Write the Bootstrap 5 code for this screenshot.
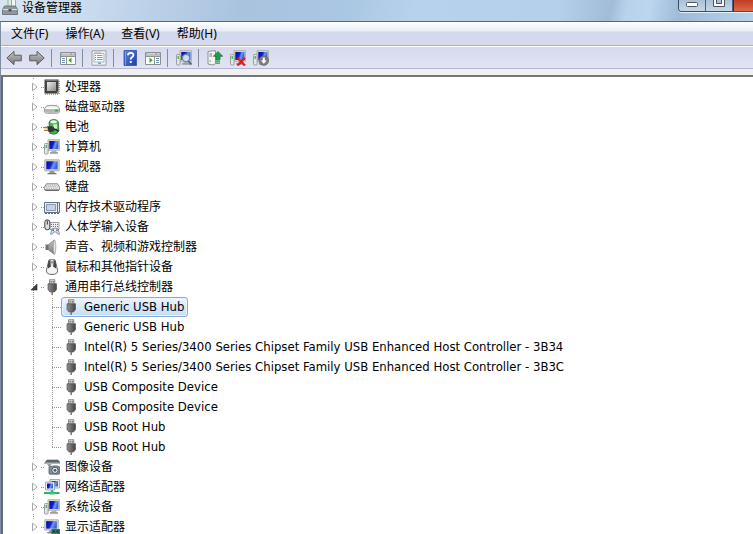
<!DOCTYPE html>
<html lang="zh-CN">
<head>
<meta charset="utf-8">
<meta name="viewport" content="width=device-width, initial-scale=1">
<title>设备管理器</title>
<link href="https://cdn.jsdelivr.net/npm/bootstrap@5.3.0/dist/css/bootstrap.min.css" rel="stylesheet">
<style>
body{font:12px/20px "Noto Sans","Noto Sans CJK SC",sans-serif;color:#000;background:#f0f0f0}
button{font:inherit;color:inherit;background:none;border:0;padding:0}
svg{display:block;flex:none}
.ico{width:16px;height:16px}
.titlebar{height:21px;background:linear-gradient(100deg,#d9e5f2 0,#cfdff0 8%,#a9c3df 32%,#a9c6e2 45%,#b7d2ec 55%,#b5d0ea 74%,#a2bcd8 81%,#b9d2ec 83%,#bdd6ee 86%,#9fbbd8 90%,#b9d3ed 100%)}
.titlebar h1{font-size:12px;line-height:15px}
.brand{padding-left:2px}
.caption{height:12px;border:1px solid #3e4d60;border-width:0 0 1px 1px;border-radius:0 0 0 4px;box-shadow:0 1px 0 #e6f0fa;overflow:hidden}
.caption button{width:27px;border-right:1px solid #4d6078;background:linear-gradient(#a9c0d8,#c6d8ea);display:flex;justify-content:center}
.caption .close-win{width:20px;border:0;border-left:1px solid #5d1a12;background:linear-gradient(#c03c20,#dd6b4a)}
.frame{border-top:1px solid #56677b;border-left:1px solid #7d8da2}
.menus{height:24px;border-bottom:1px solid #aeb0bd;background:linear-gradient(#fff 0,#e8edf6 9px,#d4d9eb 10px,#d4d9eb 100%);padding-left:2px;gap:1px}
.menus button{padding:0 8px}
.tools{height:23px;border-top:1px solid #fff;border-bottom:1px solid #b2b6d4;background:linear-gradient(#d5daec,#e0e4f5);padding-left:1px}
.tools button{width:23px;height:21px;display:flex;align-items:center;justify-content:center}
.sep{width:8px;height:18px;padding-left:3px}
.sep::before{content:"";display:block;width:1px;height:100%;background:#858a9c}
.pane{margin-top:6px;border:2px solid #696c72;border-width:2px 0 0 2px;border-top-color:#77777a;background:#fff}
ul{list-style:none;margin:0;padding:0}
.tree{padding-left:24px;background:repeating-linear-gradient(#fff 0 1px,#909090 1px 2px) 30px 0/1px 100% no-repeat}
.line{display:flex;align-items:center;height:20px;white-space:nowrap}
.twist{width:14px;height:14px;background:#fff;display:flex;align-items:center;justify-content:center}
.open .twist{background:none}
.dots{width:3px;height:1px;background:repeating-linear-gradient(90deg,#909090 0 1px,#fff 1px 2px)}
.node{display:flex;align-items:center;gap:5px;height:20px}
.kids li{padding-left:25px;background:repeating-linear-gradient(#fff 0 1px,#909090 1px 2px) 25px 0/1px 100% no-repeat}
.kids li:last-child{background-size:1px 11px}
.kids .dots{width:9px}
.kids .node{border:1px solid transparent;border-radius:3px;padding:0 3px 0 1px;font-family:"DejaVu Sans Condensed","Noto Sans",sans-serif;font-size:13px}
.kids .node.active{border-color:#84acdd;background:linear-gradient(#eef5fd,#c5dcf6);box-shadow:inset 0 0 0 1px #e9f3fe}
</style>
<script src="https://cdn.jsdelivr.net/npm/bootstrap@5.3.0/dist/js/bootstrap.bundle.min.js"></script>
</head>
<body class="vh-100 overflow-hidden d-flex flex-column">
<svg width="0" height="0" class="position-absolute" aria-hidden="true">
<defs>
<linearGradient id="gScr" x1="0" y1="0" x2="1" y2="0.3"><stop offset="0" stop-color="#0208a0"/><stop offset=".5" stop-color="#1225cc"/><stop offset=".7" stop-color="#6f96f0"/><stop offset="1" stop-color="#3560dc"/></linearGradient>
<linearGradient id="gGrey" x1="0" y1="0" x2="0" y2="1"><stop offset="0" stop-color="#c4c4c4"/><stop offset="1" stop-color="#777"/></linearGradient>
<linearGradient id="gChip" x1="0" y1="0" x2="1" y2="1"><stop offset="0" stop-color="#eee"/><stop offset="1" stop-color="#8b8b8b"/></linearGradient>
<linearGradient id="gHelp" x1="0" y1="0" x2="1" y2="1"><stop offset="0" stop-color="#5f86dc"/><stop offset="1" stop-color="#1b3fa8"/></linearGradient>
<linearGradient id="gPlug" x1="0" y1="0" x2="1" y2="0"><stop offset="0" stop-color="#8e8e8e"/><stop offset=".5" stop-color="#6a6a6a"/><stop offset="1" stop-color="#444"/></linearGradient>
<symbol id="twist" viewBox="0 0 8 10"><path d="M2.500 1.200v7.600L7 5z" fill="#fff" stroke="#a6a6a6"/></symbol>
<symbol id="twistopen" viewBox="0 0 8 8"><path d="M7 1v6H1z" fill="#404040" stroke="#262626" stroke-width=".6"/></symbol>
<symbol id="pc" viewBox="0 0 16 16"><path d="M4 .7h11.600v10.600H4z" fill="#dedccb" stroke="#a3a396" stroke-width=".8"/><path d="M5.300 2h9.200v8H5.300z" fill="url(#gScr)"/><path d="M8 11.500h4l.8 2H7.200z" fill="#b2b5b8"/><path d="M6 13.200h8v1.500H6z" fill="#8e9194"/><rect x=".5" y="4.500" width="3.600" height="10.500" rx=".8" fill="#e4e6e8" stroke="#8a8d90" stroke-width=".8"/><path d="M2.200 6v3" stroke="#35b13b" stroke-width="1.200"/></symbol>
<symbol id="monitor" viewBox="0 0 16 16"><path d="M.8.8h14.400v11H.8z" fill="#dddccc" stroke="#9e9f98" stroke-width=".8"/><path d="M2.300 2.300h11.400v8H2.300z" fill="url(#gScr)"/><path d="M6 12h4l1 2H5z" fill="#999"/><path d="M3.500 14h9v1.300h-9z" fill="#777"/></symbol>
<symbol id="cpu" viewBox="0 0 16 16"><path d="M1 15.200h14M15.200 2v13" stroke="#d69a35" stroke-width="1.600" stroke-dasharray="1 1"/><path d="M.5 .5h14v14H.5z" fill="#414141"/><path d="M1.500 1.500h12" stroke="#777"/><path d="M3 3h9v9H3z" fill="url(#gChip)"/><path d="M13 12.500h1.500V14H13z" fill="#ef9a24"/></symbol>
<symbol id="disk" viewBox="0 0 16 16"><path d="M.5 9.200 3 6.800q5-1 10 0l2.500 2.400v3.600q-.5 1.400-2 1.400h-11Q.8 14.200 .5 12.800z" fill="#f1f1f1" stroke="#8d8d8d" stroke-width=".9"/><path d="M1 9.700h14v3.500q-7 1.600-14 0z" fill="#b4b7b9"/><path d="M2 9.500h12" stroke="#fff"/><path d="M11 10.500h3v2h-3z" fill="#2ac52c"/></symbol>
<symbol id="battery" viewBox="0 0 16 16"><path d="M5 3.500 Q5.500 .6 9.500 .5T14.300 3l.6 8.500q-1 3.500-5 3.800l-4-1z" fill="#43b04c" stroke="#1c6d28" stroke-width=".8"/><ellipse cx="9.600" cy="2.700" rx="3.300" ry="1.500" fill="#f2f6f2"/><path d="M9 5.500 13 5l.3 4.500-3 .5z" fill="#cdf0c2"/><path d="M3 7.200h4.500q3 .5 3 3t-3.500 2.800H4.500z" fill="#353535"/><path d="M0 8.500h3.500M0 11.400h4" stroke="#a07c3c" stroke-width="1.300"/><path d="M10 10.200q3 0 4.500 2.300" fill="none" stroke="#222" stroke-width="1.400"/></symbol>
<symbol id="keyboard" viewBox="0 0 16 16"><path d="M2.500 4.800h11l2.200 3.500v2.200l-1.200 1h-13l-1.200-1V8.300z" fill="#f2f2f2" stroke="#777" stroke-width=".9"/><path d="M2.700 6.200h10.600M2 7.700h12M1.600 9.200h12.800" stroke="#9d9d9d" stroke-dasharray="1 .8"/><path d="M.8 11h14.400" stroke="#555"/></symbol>
<symbol id="memory" viewBox="0 0 16 16"><path d="M.5 3.500h15v10H.5z" fill="#e7ebf3" stroke="#687286"/><path d="M2.500 5.500h9v6h-9z" fill="#c8d1e2" stroke="#8a98b3"/><path d="M13.500 4v9" stroke="#63708a"/><path d="M1 14.500h14" stroke="#666" stroke-dasharray="2 1"/></symbol>
<symbol id="hid" viewBox="0 0 16 16"><path d="M6 3.500h9v7H6z" fill="#eee" stroke="#8a8a8a" stroke-width=".8"/><path d="M7 5.500h7M7 7.500h7" stroke="#777" stroke-dasharray="1 1"/><rect x=".8" y=".8" width="5" height="10" rx="2.400" fill="#ddd" stroke="#444"/><path d="M3.300 1.500v4" stroke="#333"/><path d="M6.500 15.300 8 9.800q3.500-1.300 6 0l1.500 5.500-2-.3-1-2H9.500l-1 2z" fill="#e9eef4" stroke="#5f7f9f" stroke-width=".8"/><circle cx="9.200" cy="11.300" r="1" fill="#2b75d0"/><circle cx="13" cy="11.300" r="1" fill="#cf5a42"/></symbol>
<symbol id="speaker" viewBox="0 0 16 16"><path d="M1.500 5.500h3v5.500h-3z" fill="#707070"/><path d="M4.500 5.500 10.500 .8v14.600l-6-4.400z" fill="url(#gGrey)" stroke="#777" stroke-width=".7"/><ellipse cx="10.500" cy="8" rx="1.300" ry="7" fill="#dfe5ea" stroke="#888" stroke-width=".6"/></symbol>
<symbol id="mouse" viewBox="0 0 16 16"><path d="M5 .8h6l2.600 10.500q.3 4.200-5.600 4.200t-5.600-4.200z" fill="#f4f4f4" stroke="#666"/><path d="M4.600 2Q3.500 6 4 9.500L7 7.500 6.500 1zM11.400 2Q12.500 6 12 9.500L9 7.500 9.500 1z" fill="#454545"/><path d="M6.800 1h2.400v6H6.800z" fill="#e2e2e2"/><path d="M8 2v2.500" stroke="#555"/></symbol>
<symbol id="usb" viewBox="0 0 16 16"><path d="M5.500 .7h5.300V5H5.500z" fill="#d5d5d5" stroke="#777" stroke-width=".8"/><path d="M6.600 2h1v1.500h-1zM8.800 2h1v1.500h-1z" fill="#555"/><path d="M4 4.800h8.500V10.500l-2 2.500H6l-2-2.500z" fill="url(#gPlug)" stroke="#555" stroke-width=".7"/><path d="M8.200 13v3" stroke="#777" stroke-width="1.500"/></symbol>
<symbol id="camera" viewBox="0 0 16 16"><path d="M3 1h11l2 2.500H1z" fill="#5c6a6f" stroke="#4b575d" stroke-width=".6"/><path d="M0 4.300h16" stroke="#a3b0b5" stroke-width="1.200"/><path d="M3 5.200h5l-3 2.500z" fill="#7c888d"/><rect x="5" y="7.500" width="10.700" height="7.700" rx="1" fill="#87929a" stroke="#424b50" stroke-width=".7"/><path d="M8.500 6.200h5V7.500h-5z" fill="#98a4aa"/><circle cx="11" cy="11.300" r="3.100" fill="#f6fafc" stroke="#293238" stroke-width=".8"/><circle cx="11" cy="11.300" r="1.500" fill="#2c618f"/></symbol>
<symbol id="network" viewBox="0 0 16 16"><path d="M6 .5h9.500v8.500H6z" fill="#e6e9ec" stroke="#8e98a4" stroke-width=".8"/><path d="M7.500 2h6.500v5.500H7.500z" fill="url(#gScr)"/><path d="M1.500 3h9v8h-9z" fill="#eceef0" stroke="#8e98a4" stroke-width=".8"/><path d="M3 4.500h6v5H3z" fill="url(#gScr)"/><path d="M0 14h15.500M8 11V14" stroke="#2cb467" stroke-width="1.900"/><path d="M5.500 12.500h5v3h-5z" fill="#32c777"/></symbol>
<symbol id="display" viewBox="0 0 16 16"><use href="#monitor" width="15" height="15"/><path d="M7.500 10H16v5H7.500z" fill="#237b50"/><path d="M8.500 11.500h2.500v2H8.500zM12.500 11.500h2v2h-2z" fill="#163f35"/><path d="M8 15.400h7" stroke="#e3c463" stroke-dasharray="1 1"/></symbol>
<symbol id="back" viewBox="0 0 16 16"><path d="M.8 8 8 1.300v3.900h7.300v5.600H8v3.900z" fill="url(#gGrey)" stroke="#5e5e5e"/></symbol>
<symbol id="fwd" viewBox="0 0 16 16"><use href="#back" transform="matrix(-1 0 0 1 16 0)"/></symbol>
<symbol id="console" viewBox="0 0 16 16"><path d="M.5 2.500h15v12H.5z" fill="#fff" stroke="#8b8e93"/><path d="M1 3h14v2.500H1z" fill="#a2a6ac"/><path d="M1.500 3.900h9M12 3.900h2.500" stroke="#eceef0"/><path d="M1 6.300h14" stroke="#777"/></symbol>
<symbol id="treeview" viewBox="0 0 16 16"><use href="#console"/><path d="M6.500 7v7" stroke="#999"/><path d="M2 8.500h3M2 10.500h3M2 12.500h3" stroke="#6a91b2"/><path d="M11.500 7.500v5.500L8.300 10.200z" fill="#2bad27"/></symbol>
<symbol id="actions" viewBox="0 0 16 16"><use href="#console"/><path d="M9.500 7v7" stroke="#999"/><path d="M11 8.500h3M11 10.500h3M11 12.500h3" stroke="#6a91b2"/><path d="M4.500 7.500v5.500l3.200-2.700z" fill="#2bad27"/></symbol>
<symbol id="props" viewBox="0 0 16 16"><path d="M1 .8h14v14.400H1z" fill="#f4f5f7" stroke="#999da3"/><path d="M3 3.500h10v8.500H3z" fill="#fff" stroke="#afb4bb"/><path d="M3 2.200h7" stroke="#bbb"/><path d="M6 5.500h5.500M6 7.500h5.500M6 9.500h5.500" stroke="#939aa2"/><path d="M4 5.500h1M4 7.500h1M4 9.500h1" stroke="#40a5cf"/><path d="M7 12.500h3v1.600H7z" fill="#40bde5"/></symbol>
<symbol id="help" viewBox="0 0 16 16"><path d="M2 .5h12.500v15H2z" fill="url(#gHelp)" stroke="#2c4fae" stroke-width=".8"/><path d="M3.500 1v14" stroke="#7b98e0"/><path d="M6 5.300q.1-2.400 2.700-2.400t2.700 2.300q0 1.200-1.500 2.100-1.200.7-1.200 2.200" fill="none" stroke="#fff" stroke-width="1.800"/><path d="M7.800 11h1.900v1.900H7.800z" fill="#fff"/></symbol>
<symbol id="scan" viewBox="0 0 16 16"><use href="#pc"/><circle cx="10" cy="8" r="3.600" fill="#d4eafa" fill-opacity=".9" stroke="#70889b" stroke-width="1.200"/><path d="m12.500 10.800 3 3.700" stroke="#536b8c" stroke-width="2"/></symbol>
<symbol id="update" viewBox="0 0 16 16"><path d="M1 1.500 6 .8h2.500v13l-2.500 1.200-5-1z" fill="#f1f2f2" stroke="#888" stroke-width=".9"/><path d="M2.500 4h2.500M2.500 6h2.500" stroke="#777"/><path d="M2.500 11h1.500" stroke="#40b548"/><path d="M11 1.500 15.700 6.300h-2.700v3.400H9V6.300H6.300z" fill="#249c48" stroke="#127334" stroke-width=".7"/><path d="M9 11.200h4M9 13.200h4" stroke="#249c48" stroke-width="1.300"/></symbol>
<symbol id="uninstall" viewBox="0 0 16 16"><use href="#pc"/><path d="m7.500 8 7.500 7.500M15 8l-7.500 7.500" stroke="#e21b16" stroke-width="2.200"/></symbol>
<symbol id="disable" viewBox="0 0 16 16"><use href="#pc"/><circle cx="10.800" cy="10.700" r="4.800" fill="#7d7d7d" stroke="#606060" stroke-width=".6"/><path d="M9.800 7.500h2v3h1.900l-2.900 3.200-2.900-3.200h1.900z" fill="#fff"/></symbol>
<symbol id="app" viewBox="0 0 16 16"><path d="M6 -1h3.500v8H6z" fill="#d9efe0" stroke="#7f9a88" stroke-width=".7"/><path d="M9.500 -1h4v8h-4z" fill="#f3f4f5" stroke="#87919b" stroke-width=".7"/><path d="m2.500 6-2 3.500v5h15v-5l-2-3.500z" fill="#8f979d" stroke="#5f686f" stroke-width=".8"/><path d="M.8 9.500h14.400" stroke="#dce1e5"/><path d="M6.500 9h3v2.500h-3z" fill="#495259"/></symbol>
</defs>
</svg>

<header class="titlebar d-flex justify-content-between align-items-start flex-shrink-0">
  <div class="brand d-flex align-items-start gap-1">
    <svg class="ico"><use href="#app"/></svg>
    <h1 class="m-0 fw-normal">设备管理器</h1>
  </div>
  <div class="caption d-flex">
    <button type="button" aria-label="最小化"><svg width="14" height="11"><rect x="1.500" y="2.500" width="11" height="4" rx="1" fill="#fff" stroke="#4d5460"/></svg></button>
    <button type="button" aria-label="最大化"><svg width="14" height="11"><path d="M1.500-2h11v8.500h-11z" fill="#fff" stroke="#4d5460"/><path d="M4.500-2h5v5.500h-5z" fill="#a9bdd5" stroke="#4d5460"/></svg></button>
    <button type="button" class="close-win" aria-label="关闭"></button>
  </div>
</header>

<main class="frame flex-grow-1 d-flex flex-column overflow-hidden">
  <nav class="menus d-flex align-items-center flex-shrink-0" aria-label="菜单">
    <button type="button">文件(F)</button><button type="button">操作(A)</button><button type="button">查看(V)</button><button type="button">帮助(H)</button>
  </nav>
  <div class="tools d-flex align-items-center flex-shrink-0" role="toolbar" aria-label="工具栏">
    <button type="button" aria-label="后退"><svg class="ico"><use href="#back"/></svg></button>
    <button type="button" aria-label="前进"><svg class="ico"><use href="#fwd"/></svg></button>
    <span class="sep"></span>
    <button type="button" aria-label="显示控制台树"><svg class="ico"><use href="#treeview"/></svg></button>
    <span class="sep"></span>
    <button type="button" aria-label="属性"><svg class="ico"><use href="#props"/></svg></button>
    <span class="sep"></span>
    <button type="button" aria-label="帮助"><svg class="ico"><use href="#help"/></svg></button>
    <button type="button" aria-label="操作窗格"><svg class="ico"><use href="#actions"/></svg></button>
    <span class="sep"></span>
    <button type="button" aria-label="扫描"><svg class="ico"><use href="#scan"/></svg></button>
    <span class="sep"></span>
    <button type="button" aria-label="更新"><svg class="ico"><use href="#update"/></svg></button>
    <button type="button" aria-label="卸载"><svg class="ico"><use href="#uninstall"/></svg></button>
    <button type="button" aria-label="禁用"><svg class="ico"><use href="#disable"/></svg></button>
  </div>
  <section class="pane flex-grow-1 overflow-hidden">
    <ul class="tree">
      <li><div class="line"><button type="button" class="twist" aria-label="展开"><svg width="8" height="10"><use href="#twist"/></svg></button><span class="dots"></span><button type="button" class="node"><svg class="ico"><use href="#cpu"/></svg>处理器</button></div></li>
      <li><div class="line"><button type="button" class="twist" aria-label="展开"><svg width="8" height="10"><use href="#twist"/></svg></button><span class="dots"></span><button type="button" class="node"><svg class="ico"><use href="#disk"/></svg>磁盘驱动器</button></div></li>
      <li><div class="line"><button type="button" class="twist" aria-label="展开"><svg width="8" height="10"><use href="#twist"/></svg></button><span class="dots"></span><button type="button" class="node"><svg class="ico"><use href="#battery"/></svg>电池</button></div></li>
      <li><div class="line"><button type="button" class="twist" aria-label="展开"><svg width="8" height="10"><use href="#twist"/></svg></button><span class="dots"></span><button type="button" class="node"><svg class="ico"><use href="#pc"/></svg>计算机</button></div></li>
      <li><div class="line"><button type="button" class="twist" aria-label="展开"><svg width="8" height="10"><use href="#twist"/></svg></button><span class="dots"></span><button type="button" class="node"><svg class="ico"><use href="#monitor"/></svg>监视器</button></div></li>
      <li><div class="line"><button type="button" class="twist" aria-label="展开"><svg width="8" height="10"><use href="#twist"/></svg></button><span class="dots"></span><button type="button" class="node"><svg class="ico"><use href="#keyboard"/></svg>键盘</button></div></li>
      <li><div class="line"><button type="button" class="twist" aria-label="展开"><svg width="8" height="10"><use href="#twist"/></svg></button><span class="dots"></span><button type="button" class="node"><svg class="ico"><use href="#memory"/></svg>内存技术驱动程序</button></div></li>
      <li><div class="line"><button type="button" class="twist" aria-label="展开"><svg width="8" height="10"><use href="#twist"/></svg></button><span class="dots"></span><button type="button" class="node"><svg class="ico"><use href="#hid"/></svg>人体学输入设备</button></div></li>
      <li><div class="line"><button type="button" class="twist" aria-label="展开"><svg width="8" height="10"><use href="#twist"/></svg></button><span class="dots"></span><button type="button" class="node"><svg class="ico"><use href="#speaker"/></svg>声音、视频和游戏控制器</button></div></li>
      <li><div class="line"><button type="button" class="twist" aria-label="展开"><svg width="8" height="10"><use href="#twist"/></svg></button><span class="dots"></span><button type="button" class="node"><svg class="ico"><use href="#mouse"/></svg>鼠标和其他指针设备</button></div></li>
      <li class="open"><div class="line"><button type="button" class="twist" aria-label="折叠" aria-expanded="true"><svg width="8" height="8"><use href="#twistopen"/></svg></button><span class="dots"></span><button type="button" class="node"><svg class="ico"><use href="#usb"/></svg>通用串行总线控制器</button></div>
        <ul class="kids">
          <li class="line"><span class="dots"></span><button type="button" class="node active"><svg class="ico"><use href="#usb"/></svg>Generic USB Hub</button></li>
          <li class="line"><span class="dots"></span><button type="button" class="node"><svg class="ico"><use href="#usb"/></svg>Generic USB Hub</button></li>
          <li class="line"><span class="dots"></span><button type="button" class="node"><svg class="ico"><use href="#usb"/></svg>Intel(R) 5 Series/3400 Series Chipset Family USB Enhanced Host Controller - 3B34</button></li>
          <li class="line"><span class="dots"></span><button type="button" class="node"><svg class="ico"><use href="#usb"/></svg>Intel(R) 5 Series/3400 Series Chipset Family USB Enhanced Host Controller - 3B3C</button></li>
          <li class="line"><span class="dots"></span><button type="button" class="node"><svg class="ico"><use href="#usb"/></svg>USB Composite Device</button></li>
          <li class="line"><span class="dots"></span><button type="button" class="node"><svg class="ico"><use href="#usb"/></svg>USB Composite Device</button></li>
          <li class="line"><span class="dots"></span><button type="button" class="node"><svg class="ico"><use href="#usb"/></svg>USB Root Hub</button></li>
          <li class="line"><span class="dots"></span><button type="button" class="node"><svg class="ico"><use href="#usb"/></svg>USB Root Hub</button></li>
        </ul>
      </li>
      <li><div class="line"><button type="button" class="twist" aria-label="展开"><svg width="8" height="10"><use href="#twist"/></svg></button><span class="dots"></span><button type="button" class="node"><svg class="ico"><use href="#camera"/></svg>图像设备</button></div></li>
      <li><div class="line"><button type="button" class="twist" aria-label="展开"><svg width="8" height="10"><use href="#twist"/></svg></button><span class="dots"></span><button type="button" class="node"><svg class="ico"><use href="#network"/></svg>网络适配器</button></div></li>
      <li><div class="line"><button type="button" class="twist" aria-label="展开"><svg width="8" height="10"><use href="#twist"/></svg></button><span class="dots"></span><button type="button" class="node"><svg class="ico"><use href="#pc"/></svg>系统设备</button></div></li>
      <li><div class="line"><button type="button" class="twist" aria-label="展开"><svg width="8" height="10"><use href="#twist"/></svg></button><span class="dots"></span><button type="button" class="node"><svg class="ico"><use href="#display"/></svg>显示适配器</button></div></li>
    </ul>
  </section>
</main>
</body>
</html>
